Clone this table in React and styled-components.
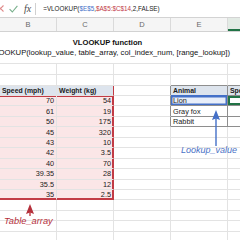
import React from "react";
import styled, { createGlobalStyle } from "styled-components";

const GlobalStyle = createGlobalStyle`
  html, body {
    margin: 0;
    padding: 0;
    background: #fff;
  }
  body {
    font-family: "Liberation Sans", Arial, sans-serif;
  }
`;

const GRID = "#e3e3e3";
const RED = "#c23b45";
const BLUE = "#4470c8";
const BOX = "#8e8e8e";
const COLS = "57px 57px 57px 57px 57px";

const Page = styled.div`
  position: relative;
  width: 240px;
  height: 240px;
  overflow: hidden;
  background: #fff;
`;

const FormulaBar = styled.div`
  display: flex;
  align-items: center;
  height: 18px;
  box-sizing: border-box;
  border-bottom: 1px solid #d3d3d3;
`;

const BarIcon = styled.svg`
  flex: none;
  margin-left: ${(p) => p.$ml || 0}px;
`;

const Fx = styled.span`
  margin-left: 6px;
  font-family: "Liberation Serif", serif;
  font-style: italic;
  font-size: 10px;
  color: #4a4a4a;
`;

const BarDivider = styled.div`
  width: 1px;
  height: 12px;
  margin-left: 4px;
  background: #d0d0d0;
`;

const FormulaText = styled.div`
  margin-left: 7px;
  font-size: 6.3px;
  color: #222;
  white-space: nowrap;
`;

const Ref = styled.span`
  color: ${(p) => p.$color};
`;

const ColHeaderRow = styled.div`
  display: grid;
  grid-template-columns: ${COLS};
  height: 14px;
  box-sizing: border-box;
  background: #f5f5f5;
  border-bottom: 1px solid #d2d2d2;
`;

const ColHeader = styled.div`
  display: flex;
  align-items: center;
  justify-content: center;
  box-sizing: border-box;
  font-size: 7.5px;
  color: ${(p) => (p.$active ? "#1d6b3e" : "#6a6a6a")};
  background: ${(p) => (p.$active ? "#e3ebe5" : "transparent")};
  border-right: 1px solid #dadada;
  box-shadow: ${(p) => (p.$active ? "inset 0 -2px 0 #217346" : "none")};
`;

const TitleBlock = styled.div`
  height: 32px;
  box-sizing: border-box;
  padding-top: 6px;
  border-bottom: 1px solid ${GRID};
`;

const Title = styled.div`
  width: 215px;
  height: 10px;
  line-height: 10px;
  text-align: center;
  font-weight: 700;
  font-size: 7.6px;
  color: #111;
`;

const Syntax = styled.div`
  display: flex;
  justify-content: flex-end;
  width: 230px;
  height: 10px;
  line-height: 10px;
  font-size: 7.7px;
  color: #111;
  white-space: nowrap;
`;

const Row = styled.div`
  display: grid;
  grid-template-columns: ${COLS};
  height: ${(p) => p.$h}px;
`;

const ring = (edges, color, w = 1) =>
  edges
    .split("")
    .map((e) =>
      e === "t"
        ? `inset 0 ${w}px 0 ${color}`
        : e === "b"
        ? `inset 0 -${w}px 0 ${color}`
        : e === "l"
        ? `inset ${w}px 0 0 ${color}`
        : `inset -${w}px 0 0 ${color}`
    )
    .join(", ");

const Cell = styled.div`
  position: relative;
  box-sizing: border-box;
  display: flex;
  align-items: center;
  justify-content: ${(p) => (p.$right ? "flex-end" : "flex-start")};
  padding: 0 2px;
  overflow: hidden;
  white-space: nowrap;
  font-size: ${(p) => (p.$head ? 6.9 : 7.3)}px;
  font-weight: ${(p) => (p.$head ? 700 : 400)};
  color: #1b1b1b;
  background: ${(p) => p.$fill || "transparent"};
  border-right: 1px solid ${(p) => p.$rline || GRID};
  border-bottom: 1px solid ${(p) => p.$bline || GRID};
  box-shadow: ${(p) => p.$ring || "none"};
`;

const Handle = styled.span`
  position: absolute;
  width: 3px;
  height: 3px;
  background: ${(p) => p.$color};
  ${(p) => (p.$v === "t" ? "top: -2px;" : "bottom: -2px;")}
  ${(p) => (p.$h === "l" ? "left: -2px;" : "right: -2px;")}
  z-index: 2;
`;

const Arrow = styled.svg`
  position: absolute;
  left: ${(p) => p.$x}px;
  top: ${(p) => p.$y}px;
  overflow: visible;
`;

const Label = styled.div`
  position: absolute;
  left: ${(p) => p.$x}px;
  top: ${(p) => p.$y}px;
  font-style: italic;
  font-size: ${(p) => p.$size}px;
  line-height: 10px;
  color: ${(p) => p.$color};
  white-space: nowrap;
`;

const speeds = ["70", "61", "50", "45", "43", "42", "40", "39.35", "35.5", "35"];
const weights = ["54", "19", "175", "320", "10", "3.5", "70", "28", "12", "2.5"];
const animals = ["Lion", "Gray fox", "Rabbit"];
const HEAD_FILL = "#dde4ed";
const PINK = "#fbe6e7";

const EmptyRow = ({ h }) => (
  <Row $h={h}>
    {[0, 1, 2, 3, 4].map((i) => (
      <Cell key={i} />
    ))}
  </Row>
);

const DataRow = ({ i }) => {
  const last = i === 9;
  const first = i === 0;
  const animal = animals[i];
  const inLookup = i < 3;
  const redEdges = (first ? "t" : "") + (last ? "b" : "");
  return (
    <Row $h={10.45}>
      <Cell
        $right
        $fill={PINK}
        $bline={last ? RED : GRID}
        $ring={redEdges ? ring(redEdges, RED) : undefined}
      >
        {speeds[i]}
      </Cell>
      <Cell
        $right
        $fill={PINK}
        $rline={RED}
        $bline={last ? RED : GRID}
        $ring={ring("r" + redEdges, RED)}
      >
        {weights[i]}
        {first && <Handle $color={RED} $v="t" $h="r" />}
        {last && <Handle $color={RED} $v="b" $h="r" />}
      </Cell>
      <Cell $rline={inLookup ? BOX : GRID} />
      {first ? (
        <Cell $fill="#e8eef9" $rline={BOX} $bline={BOX} $ring={ring("tlrb", BLUE, 1.5)}>
          {animal}
          <Handle $color={BLUE} $v="t" $h="l" />
          <Handle $color={BLUE} $v="t" $h="r" />
          <Handle $color={BLUE} $v="b" $h="l" />
          <Handle $color={BLUE} $v="b" $h="r" />
        </Cell>
      ) : (
        <Cell $rline={inLookup ? BOX : GRID} $bline={inLookup ? BOX : GRID}>
          {animal}
        </Cell>
      )}
      <Cell
        $rline={inLookup ? BOX : GRID}
        $bline={inLookup ? BOX : GRID}
        $ring={first ? ring("tlb", "#217346", 2) : undefined}
      />
    </Row>
  );
};

export default function App() {
  return (
    <Page>
      <GlobalStyle />
      <FormulaBar>
        <BarIcon $ml={-3} width="7" height="7" viewBox="0 0 7 7">
          <path d="M0.5 0.5 L6.5 6.5 M6.5 0.5 L0.5 6.5" stroke="#e08a8a" strokeWidth="1.1" />
        </BarIcon>
        <BarIcon $ml={5} width="9" height="8" viewBox="0 0 9 8">
          <path d="M0.6 4.2 L3.3 7 L8.4 0.8" stroke="#79b08c" strokeWidth="1.1" fill="none" />
        </BarIcon>
        <Fx>fx</Fx>
        <BarDivider />
        <FormulaText>
          =VLOOKUP(<Ref $color={BLUE}>$E$5</Ref>,<Ref $color={RED}>$A$5:$C$14</Ref>,2,FALSE)
        </FormulaText>
      </FormulaBar>

      <ColHeaderRow>
        <ColHeader>B</ColHeader>
        <ColHeader>C</ColHeader>
        <ColHeader>D</ColHeader>
        <ColHeader>E</ColHeader>
        <ColHeader $active>F</ColHeader>
      </ColHeaderRow>

      <TitleBlock>
        <Title>VLOOKUP function</Title>
        <Syntax>=VLOOKUP(lookup_value, table_array, col_index_num, [range_lookup])</Syntax>
      </TitleBlock>

      <EmptyRow h={11} />
      <Row $h={11}>
        <Cell />
        <Cell />
        <Cell />
        <Cell $bline={BOX} />
        <Cell $bline={BOX} />
      </Row>
      <Row $h={10}>
        <Cell $head $fill={HEAD_FILL}>Speed (mph)</Cell>
        <Cell $head $fill={HEAD_FILL} $rline={RED}>Weight (kg)</Cell>
        <Cell $rline={BOX} />
        <Cell $head $fill={HEAD_FILL} $rline={BOX} $bline={BLUE}>Animal</Cell>
        <Cell $head $fill={HEAD_FILL} $rline={BOX} $bline={BOX}>Speed (mph)</Cell>
      </Row>
      {speeds.map((_, i) => (
        <DataRow key={i} i={i} />
      ))}
      {[0, 1, 2, 3].map((i) => (
        <EmptyRow key={i} h={10.45} />
      ))}

      <Arrow $x={211} $y={109} width="10" height="40" viewBox="0 0 10 40">
        <path d="M5 8 L5 37" stroke={BLUE} strokeWidth="1.4" />
        <path d="M5 1 L1 11 L5 9.5 L9 11 Z" fill={BLUE} />
      </Arrow>
      <Label $x={181} $y={145} $size={9} $color="#4a72c6">
        Lookup_value
      </Label>

      <Arrow $x={24.5} $y={203} width="10" height="14" viewBox="0 0 10 14">
        <path d="M5 8 L5 13" stroke={RED} strokeWidth="1.4" />
        <path d="M5 1 L1 11 L5 9.5 L9 11 Z" fill="#b5303b" />
      </Arrow>
      <Label $x={4} $y={216} $size={9.3} $color="#b5303b">
        Table_array
      </Label>
    </Page>
  );
}
